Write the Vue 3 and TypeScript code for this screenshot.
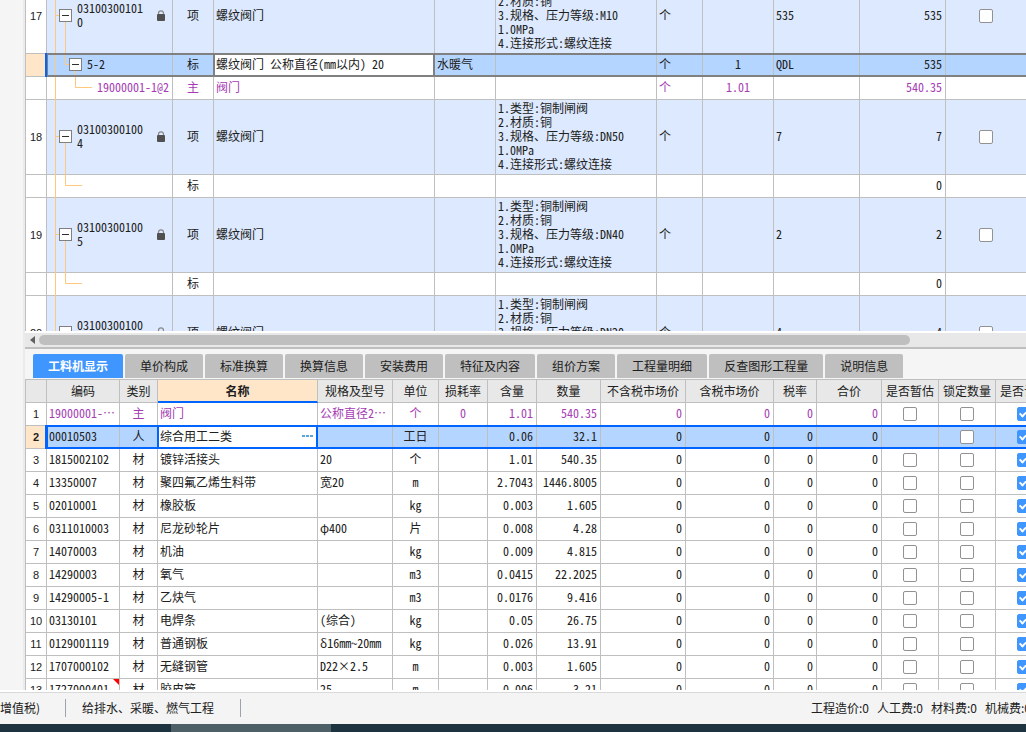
<script setup lang="ts">
import { ref } from 'vue'

interface BillRow {
  no?: string
  level: 'item' | 'norm' | 'material' | 'blank'
  code?: string
  kind: string
  name?: string
  major?: string
  feature?: string
  unit?: string
  content?: string
  expr?: string
  qty: string
}

interface Resource {
  no: number
  code: string
  kind: string
  name: string
  spec?: string
  unit: string
  loss?: string
  content: string
  qty: string
}

const feature = (dn: string) =>
  `1.类型:铜制闸阀\n2.材质:铜\n3.规格、压力等级:${dn}\n1.0MPa\n4.连接形式:螺纹连接`

const bill: BillRow[] = [
  { no: '17', level: 'item', code: '031003001010', kind: '项', name: '螺纹阀门', feature: feature('M10'), unit: '个', expr: '535', qty: '535' },
  { level: 'norm', code: '5-2', kind: '标', name: '螺纹阀门 公称直径(mm以内) 20', major: '水暖气', unit: '个', content: '1', expr: 'QDL', qty: '535' },
  { level: 'material', code: '19000001-1@2', kind: '主', name: '阀门', unit: '个', content: '1.01', qty: '540.35' },
  { no: '18', level: 'item', code: '031003001004', kind: '项', name: '螺纹阀门', feature: feature('DN50'), unit: '个', expr: '7', qty: '7' },
  { level: 'blank', kind: '标', qty: '0' },
  { no: '19', level: 'item', code: '031003001005', kind: '项', name: '螺纹阀门', feature: feature('DN40'), unit: '个', expr: '2', qty: '2' },
  { level: 'blank', kind: '标', qty: '0' },
  { no: '20', level: 'item', code: '031003001006', kind: '项', name: '螺纹阀门', feature: feature('DN20'), unit: '个', expr: '4', qty: '4' },
]

const treePath: Record<BillRow['level'], string> = {
  item: 'M8.5 0V75M8.5 36.5H12M18.5 43V75',
  norm: 'M8.5 0V23M18.5 0V10.5H22M28.5 17V23',
  material: 'M8.5 0V23M28.5 0V10.5H45',
  blank: 'M8.5 0V23M18.5 0V10.5H35',
}

const tabs = ['工料机显示', '单价构成', '标准换算', '换算信息', '安装费用', '特征及内容', '组价方案', '工程量明细', '反查图形工程量', '说明信息']
const activeTab = ref(tabs[0])

const resources: Resource[] = [
  { no: 1, code: '19000001-…', kind: '主', name: '阀门', spec: '公称直径2…', unit: '个', loss: '0', content: '1.01', qty: '540.35' },
  { no: 2, code: '00010503', kind: '人', name: '综合用工二类', unit: '工日', content: '0.06', qty: '32.1' },
  { no: 3, code: '1815002102', kind: '材', name: '镀锌活接头', spec: '20', unit: '个', content: '1.01', qty: '540.35' },
  { no: 4, code: '13350007', kind: '材', name: '聚四氟乙烯生料带', spec: '宽20', unit: 'm', content: '2.7043', qty: '1446.8005' },
  { no: 5, code: '02010001', kind: '材', name: '橡胶板', unit: 'kg', content: '0.003', qty: '1.605' },
  { no: 6, code: '0311010003', kind: '材', name: '尼龙砂轮片', spec: 'φ400', unit: '片', content: '0.008', qty: '4.28' },
  { no: 7, code: '14070003', kind: '材', name: '机油', unit: 'kg', content: '0.009', qty: '4.815' },
  { no: 8, code: '14290003', kind: '材', name: '氧气', unit: 'm3', content: '0.0415', qty: '22.2025' },
  { no: 9, code: '14290005-1', kind: '材', name: '乙炔气', unit: 'm3', content: '0.0176', qty: '9.416' },
  { no: 10, code: '03130101', kind: '材', name: '电焊条', spec: '(综合)', unit: 'kg', content: '0.05', qty: '26.75' },
  { no: 11, code: '0129001119', kind: '材', name: '普通钢板', spec: 'δ16mm~20mm', unit: 'kg', content: '0.026', qty: '13.91' },
  { no: 12, code: '1707000102', kind: '材', name: '无缝钢管', spec: 'D22×2.5', unit: 'm', content: '0.003', qty: '1.605' },
  { no: 13, code: '1727000401', kind: '材', name: '胶皮管', spec: '25', unit: 'm', content: '0.006', qty: '3.21' },
]

const costs = ['工程造价:0', '人工费:0', '材料费:0', '机械费:0']
</script>

<template>
  <div class="app">
    <div class="body">
      <aside class="rail"></aside>
      <main class="work">
        <section class="bill-pane">
          <table class="grid bill">
            <colgroup>
              <col class="c-no" /><col class="b-code" /><col class="b-kind" /><col class="b-name" /><col class="b-major" />
              <col class="b-feature" /><col class="b-unit" /><col class="b-content" /><col class="b-expr" /><col class="b-qty" /><col />
            </colgroup>
            <tbody>
              <tr v-for="(r, i) in bill" :key="i" :class="[r.level, { selected: r.level === 'norm' }]">
                <th class="no" scope="row">{{ r.no }}</th>
                <td class="code">
                  <svg class="tree" aria-hidden="true"><path :d="treePath[r.level]" fill="none" stroke="#ffc87d" /></svg>
                  <div class="node">
                    <button v-if="r.level === 'item' || r.level === 'norm'" class="toggle" type="button" aria-label="折叠"></button>
                    <span class="code-text">{{ r.code }}</span>
                    <svg v-if="r.level === 'item'" class="lock" width="8" height="11" viewBox="0 0 8 11" aria-hidden="true">
                      <path d="M1.5 5V3.2Q1.5 .8 4 .8T6.5 3.2V5" fill="none" stroke="#888" stroke-width="1.2" />
                      <rect y="4" width="8" height="7" rx="1" fill="#505050" />
                    </svg>
                  </div>
                </td>
                <td class="mid">{{ r.kind }}</td>
                <td v-if="r.level === 'norm'" class="editing"><input class="edit" type="text" :value="r.name" aria-label="名称" /></td>
                <td v-else>{{ r.name }}</td>
                <td>{{ r.major }}</td>
                <td class="feature">{{ r.feature }}</td>
                <td>{{ r.unit }}</td>
                <td class="mid">{{ r.content }}</td>
                <td>{{ r.expr }}</td>
                <td class="num">{{ r.qty }}</td>
                <td class="check"><input v-if="r.level === 'item'" type="checkbox" aria-label="选择" /></td>
              </tr>
            </tbody>
          </table>
        </section>
        <div class="scrollbar">
          <button class="arrow" type="button" aria-label="向左滚动">
            <svg width="5" height="8" viewBox="0 0 5 8"><path d="M5 0V8L0 4Z" fill="#606060" /></svg>
          </button>
          <div class="track"><div class="thumb"></div></div>
        </div>
        <nav class="tabs" role="tablist">
          <button v-for="t in tabs" :key="t" type="button" role="tab" :aria-selected="t === activeTab" :class="['tab', { active: t === activeTab }]" @click="activeTab = t">{{ t }}</button>
        </nav>
        <section class="res-pane">
          <table class="grid res">
            <colgroup>
              <col class="c-no" /><col class="r-code" /><col class="r-kind" /><col class="r-name" /><col class="r-spec" /><col class="r-unit" />
              <col class="r-loss" /><col class="r-loss" /><col class="r-qty" /><col class="r-net" /><col class="r-gross" /><col class="r-rate" />
              <col class="r-total" /><col class="r-flag" /><col class="r-flag" /><col class="r-flag" />
            </colgroup>
            <thead>
              <tr>
                <th></th><th>编码</th><th>类别</th><th class="current">名称</th><th>规格及型号</th><th>单位</th><th>损耗率</th><th>含量</th>
                <th>数量</th><th>不含税市场价</th><th>含税市场价</th><th>税率</th><th>合价</th><th>是否暂估</th><th>锁定数量</th><th>是否计价</th>
              </tr>
            </thead>
            <tbody>
              <tr v-for="r in resources" :key="r.no" :class="{ material: r.no === 1, selected: r.no === 2 }">
                <th class="no" scope="row">{{ r.no }}</th>
                <td :class="['code', { flagged: r.no === 13 }]">{{ r.code }}</td>
                <td class="mid">{{ r.kind }}</td>
                <td v-if="r.no === 2" class="editing">
                  <div class="editor">
                    <input class="edit" type="text" :value="r.name" aria-label="名称" />
                    <button class="more" type="button" aria-label="更多">
                      <svg width="11" height="2" viewBox="0 0 11 2"><path d="M0 1H3M4 1H7M8 1H11" stroke="#5aa5dc" stroke-width="2" /></svg>
                    </button>
                  </div>
                </td>
                <td v-else>{{ r.name }}</td>
                <td>{{ r.spec }}</td>
                <td class="mid">{{ r.unit }}</td>
                <td class="mid">{{ r.loss }}</td>
                <td class="num">{{ r.content }}</td>
                <td class="num">{{ r.qty }}</td>
                <td class="num">0</td>
                <td class="num">0</td>
                <td class="num">0</td>
                <td class="num">0</td>
                <td class="check"><input v-if="r.no !== 2" type="checkbox" aria-label="是否暂估" /></td>
                <td class="check"><input type="checkbox" aria-label="锁定数量" /></td>
                <td class="check"><input type="checkbox" checked aria-label="是否计价" /></td>
              </tr>
            </tbody>
          </table>
        </section>
      </main>
    </div>
    <footer class="status">
      <span class="tax">增值税)</span>
      <span class="project">给排水、采暖、燃气工程</span>
      <div class="costs"><span v-for="c in costs" :key="c">{{ c }}</span></div>
    </footer>
    <div class="taskbar"><div class="task"></div></div>
  </div>
</template>

<style>
html, body { margin: 0; overflow: hidden; }
</style>

<style scoped>
.app {
  display: flex;
  flex-direction: column;
  height: 100vh;
  overflow: hidden;
  background: #fff;
  color: #202020;
  font: 12px/14px "Noto Sans CJK SC", sans-serif;
}
button, input { font: inherit; color: inherit; margin: 0; padding: 0; border: 0; }
.body { display: flex; flex: 1; min-height: 0; }
.rail {
  flex: none;
  box-sizing: border-box;
  width: 25px;
  margin-bottom: 2px;
  background: #f5f5f5;
  border-right: 2px solid #ebebeb;
}
.work { display: flex; flex-direction: column; flex: 1; min-width: 0; }
.bill-pane { flex: 331 1 0; min-height: 0; overflow: hidden; }
.res-pane { flex: 310 1 0; min-height: 0; overflow: hidden; margin-bottom: 2px; }

.grid {
  table-layout: fixed;
  border-collapse: separate;
  border-spacing: 0;
  border-left: 1px solid #bfbfbf;
  font-feature-settings: "hwid";
}
.grid th, .grid td {
  box-sizing: border-box;
  position: relative;
  height: 23px;
  padding: 0 2px 2px;
  border-right: 1px solid #bfbfbf;
  border-bottom: 1px solid #bfbfbf;
  white-space: nowrap;
  text-align: left;
  font-weight: 400;
}
.bill td:last-child { border-right: 0; }
.grid .mid { text-align: center; }
.grid .num { text-align: right; padding-right: 3px; }
.grid .no {
  padding: 0;
  text-align: center;
  background: #fff;
  color: #202020;
  font: 11px/14px "Liberation Sans", sans-serif;
}
.grid .check { padding: 0; text-align: center; }
.grid .material { color: #a53cb4; }
.c-no { width: 21px; }

.bill { width: 100%; margin-top: -21px; }
.b-code { width: 126px; }
.b-kind { width: 41px; }
.b-name { width: 221px; }
.b-major { width: 61px; }
.b-feature { width: 161px; }
.b-unit { width: 46px; }
.b-content { width: 71px; }
.b-expr, .b-qty { width: 86px; }
.bill .item td { height: 75px; background: #dce9fe; }
.bill .feature { white-space: pre-line; }
.bill .code { padding: 0 0 1px; }
.tree { position: absolute; left: 0; top: 0; width: 100%; height: calc(100% + 1px); }
.node { position: relative; display: flex; align-items: center; gap: 5px; padding-left: 12px; }
.norm .node { padding-left: 22px; }
.material .node { padding-left: 50px; }
.code-text { padding-bottom: 1px; }
.item .code-text { width: 67px; white-space: normal; word-break: break-all; }
.toggle {
  box-sizing: border-box;
  width: 13px;
  height: 13px;
  flex: none;
  border: 1px solid #808080;
  background: linear-gradient(#303030, #303030) center / 7px 1px no-repeat #fff;
}
.lock { margin-left: 8px; }

.grid .selected td { background: #b4d5ff; }
.grid .selected .no { background: #ffe6c8; }
.grid .selected td::after {
  content: "";
  position: absolute;
  inset: -1px -1px -1px 0;
  border: solid #808080;
  border-width: 2px 0;
  pointer-events: none;
}
.grid .selected .code::after { border-left-width: 1px; }
.grid .selected .editing { background: #fff; }
.grid .selected .editing::after { left: -1px; border-width: 2px; }
.grid .selected .no::after {
  content: "";
  position: absolute;
  inset: -1px -1px -1px auto;
  width: 2px;
  background: #0064ff;
}
.res .selected td::after, .res .selected .editing::after { border-color: #0064ff; }
.res .selected .no { font-weight: 700; }
.edit { display: block; width: 100%; height: 14px; background: transparent; outline: 0; }
.editor { display: flex; align-items: center; }
.editor .edit { flex: 1; min-width: 0; }
.more { display: flex; align-items: center; height: 14px; padding-right: 2px; background: transparent; }

input[type="checkbox"] {
  appearance: none;
  display: block;
  box-sizing: border-box;
  width: 14px;
  height: 14px;
  margin: 0 auto;
  border: 1px solid #929292;
  border-radius: 2px;
  background: #fff;
}
input[type="checkbox"]:checked { border-color: #4096ff; background: #4096ff; }
input[type="checkbox"]:checked::after {
  content: "";
  display: block;
  width: 3px;
  height: 6px;
  margin: 1px 0 0 3px;
  border: solid #fff;
  border-width: 0 2px 2px 0;
  transform: rotate(45deg);
}

.scrollbar {
  display: flex;
  align-items: center;
  flex: none;
  height: 14px;
  margin-top: 2px;
  background: #e8e8e8;
  border-bottom: 2px solid #bfbfbf;
}
.arrow { display: flex; width: 14px; justify-content: center; background: transparent; }
.track { flex: 1; padding-right: 116px; }
.thumb { height: 10px; border-radius: 5px; background: #bfbfbf; }

.tabs {
  display: flex;
  align-items: flex-start;
  flex: none;
  gap: 2px;
  height: 25px;
  padding: 5px 0 0 8px;
  background: #f5f5f5;
  border-bottom: 1px solid #bfbfbf;
}
.tab { height: 24px; padding: 0 15px; border-radius: 2px 2px 0 0; background: #bfbfbf; white-space: nowrap; }
.tab.active { background: #4096ff; color: #fff; font-weight: 700; }

.res { width: 1028px; }
.r-code { width: 73px; }
.r-kind { width: 38px; }
.r-name { width: 160px; }
.r-spec { width: 75px; }
.r-unit { width: 46px; }
.r-loss { width: 49px; }
.r-qty { width: 64px; }
.r-net { width: 85px; }
.r-gross { width: 88px; }
.r-rate { width: 43px; }
.r-total { width: 65px; }
.r-flag { width: 57px; }
.grid thead th { padding: 0; text-align: center; background: #e8e8e8; }
.grid thead .current { background: #ffe6c8; border-bottom: 2px solid #0064ff; font-weight: 700; }
.flagged::before {
  content: "";
  position: absolute;
  top: 0;
  right: 0;
  border: 3px solid red;
  border-left-color: transparent;
  border-bottom-color: transparent;
}

.status {
  display: flex;
  align-items: center;
  flex: none;
  box-sizing: border-box;
  height: 32px;
  padding-bottom: 1px;
  border-top: 1px solid #d9d9d9;
  background: #f4f4f4;
  white-space: nowrap;
  line-height: 18px;
}
.tax, .project { border-right: 1px solid #9ca3ad; }
.tax { box-sizing: border-box; width: 66px; }
.project { padding: 0 26px 0 16px; }
.costs { display: flex; gap: 8px; margin: 0 -5px 0 auto; }
.taskbar { flex: none; height: 8px; background: #1d3340; }
.task { width: 160px; height: 8px; margin-left: 171px; background: #4d6068; }
</style>
